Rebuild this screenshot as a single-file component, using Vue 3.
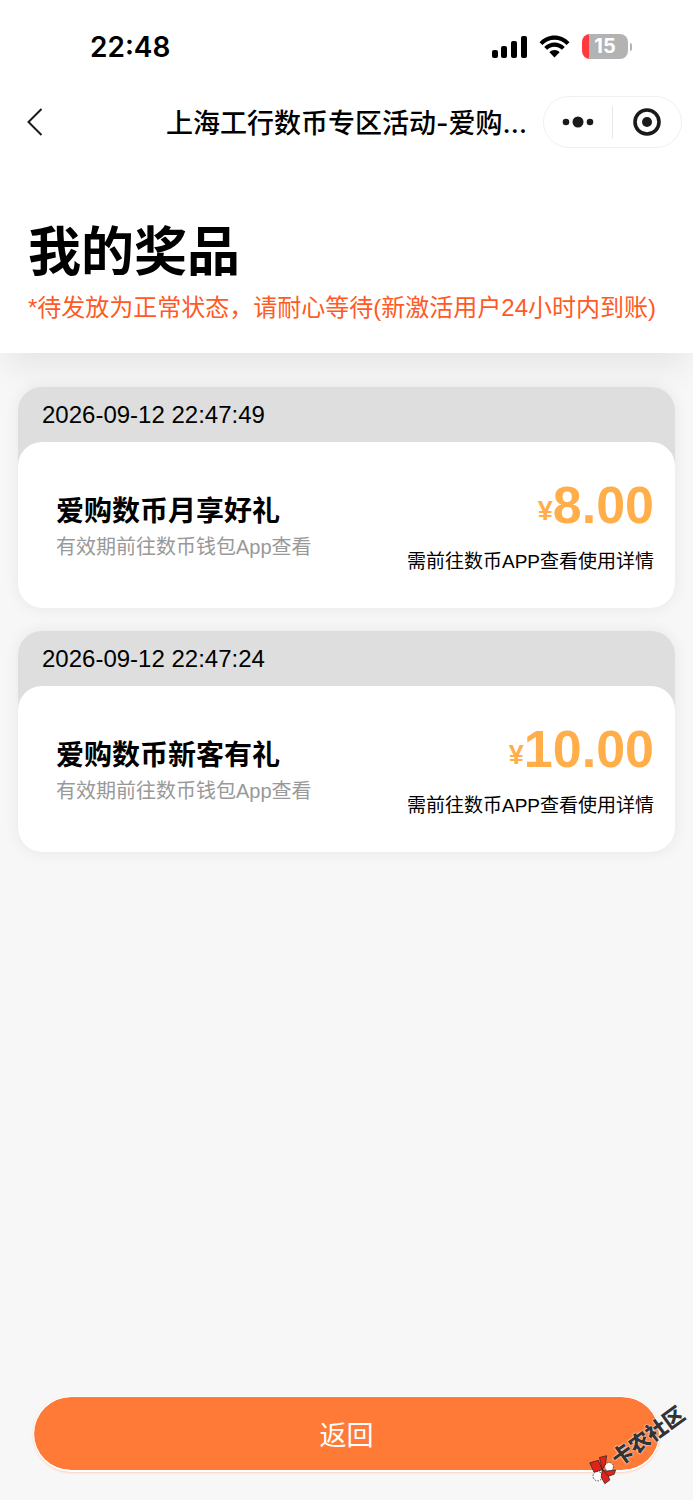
<script setup>
import { ref } from "vue";

// Lista de premios del usuario
const premios = ref([
  {
    fecha: "2026-09-12 22:47:49",
    nombre: "爱购数币月享好礼",
    validez: "有效期前往数币钱包App查看",
    importe: "8.00",
    nota: "需前往数币APP查看使用详情",
  },
  {
    fecha: "2026-09-12 22:47:24",
    nombre: "爱购数币新客有礼",
    validez: "有效期前往数币钱包App查看",
    importe: "10.00",
    nota: "需前往数币APP查看使用详情",
  },
]);
</script>

<template>
  <div class="pagina">
    <!-- Cabecera blanca -->
    <header class="cabecera">
      <!-- Barra de estado -->
      <div class="barra-estado">
        <span class="hora">22:48</span>
        <div class="indicadores">
          <svg class="icon-senal" viewBox="0 0 36 22">
            <rect x="1" y="14" width="6" height="8" rx="2"></rect>
            <rect x="10" y="10" width="6" height="12" rx="2"></rect>
            <rect x="20" y="5" width="6" height="17" rx="2"></rect>
            <rect x="30" y="0" width="6" height="22" rx="2"></rect>
          </svg>
          <svg class="icon-wifi" viewBox="0 0 31 23">
            <path d="M0.5 7.2 C8.5 -1.9 22.5 -1.9 30.5 7.2 L27.6 10 C21 2.9 10 2.9 3.4 10 Z"></path>
            <path d="M5.2 12 C10.8 6 20.2 6 25.8 12 L22.9 14.8 C18.8 10.6 12.2 10.6 8.1 14.8 Z"></path>
            <path d="M10.4 17.2 C13.2 14.4 17.8 14.4 20.6 17.2 L15.5 22.4 Z"></path>
          </svg>
          <span class="bateria"><span class="bateria-nivel">15</span></span>
        </div>
      </div>

      <!-- Barra de navegación -->
      <nav class="navegacion">
        <button class="btn-atras" aria-label="返回">
          <svg viewBox="0 0 16 28" fill="none" stroke="#1a1a1a" stroke-width="2">
            <path d="M14.5 1 L1.5 14 L14.5 27"></path>
          </svg>
        </button>
        <span class="titulo">上海工行数币专区活动-爱购…</span>
        <div class="capsula">
          <button class="btn-capsula" aria-label="更多">
            <svg class="icon-mas" viewBox="0 0 30 12" fill="#1a1a1a">
              <circle cx="3" cy="6" r="3.3"></circle>
              <circle cx="15" cy="6" r="5.5"></circle>
              <circle cx="27" cy="6" r="3.3"></circle>
            </svg>
          </button>
          <span class="separador"></span>
          <button class="btn-capsula" aria-label="关闭">
            <svg class="icon-cerrar" viewBox="0 0 28 28">
              <circle cx="14" cy="14" r="12" fill="none" stroke="#1a1a1a" stroke-width="3.6"></circle>
              <circle cx="14" cy="14" r="5" fill="#1a1a1a"></circle>
            </svg>
          </button>
        </div>
      </nav>

      <h1>我的奖品</h1>
      <p class="aviso">*待发放为正常状态，请耐心等待(新激活用户24小时内到账)</p>
    </header>

    <!-- Lista de premios -->
    <main class="lista">
      <article v-for="premio in premios" :key="premio.fecha" class="premio">
        <time class="fecha">{{ premio.fecha }}</time>
        <div class="contenido">
          <div class="detalle">
            <h2>{{ premio.nombre }}</h2>
            <p>{{ premio.validez }}</p>
          </div>
          <div class="valor">
            <strong class="importe"><span class="moneda">¥</span>{{ premio.importe }}</strong>
            <p>{{ premio.nota }}</p>
          </div>
        </div>
      </article>
    </main>

    <!-- Botón inferior -->
    <footer class="pie">
      <button class="btn-volver">返回</button>
      <div class="marca">
        <svg class="icon-marca" viewBox="0 0 78 78" stroke="#222" stroke-width="2">
          <g transform="rotate(36 39 39)">
            <circle cx="56" cy="31" r="12" fill="#fff" stroke-dasharray="5 3"></circle>
            <circle cx="24" cy="57" r="13" fill="#fff" stroke-dasharray="5 3"></circle>
            <path d="M2 20 L26 13 L37 39 L14 46 Z" fill="#e3231b"></path>
            <path d="M29 5 L49 0 L46 22 L37 39 Z" fill="#e3231b"></path>
            <path d="M37 39 L50 43 L74 40 L70 52 L54 57 Z" fill="#e3231b"></path>
            <path d="M37 39 L54 57 L58 68 L44 78 L34 60 Z" fill="#e3231b"></path>
          </g>
        </svg>
        <span>卡农社区</span>
      </div>
    </footer>
  </div>
</template>

<style>
body {
  background-color: #f7f7f7;
}
</style>

<style scoped>
.pagina {
  display: flex;
  flex-direction: column;
  min-height: 100vh;
  background-color: #f7f7f7;
  color: #000;
  font-family: "Liberation Sans", "Noto Sans CJK SC", sans-serif;
}

h1,
h2,
p {
  margin: 0;
}

button {
  padding: 0;
  border: none;
  background: none;
  font-family: inherit;
  cursor: pointer;
}

svg {
  display: block;
}

/* Cabecera */
.cabecera {
  background-color: #fff;
  padding-bottom: 30px;
  box-shadow: 0 20px 30px -6px rgba(0, 0, 0, 0.07);
}

.barra-estado {
  display: flex;
  align-items: center;
  justify-content: space-between;
  height: 93px;
  padding: 0 61px 0 90px;
}

.hora {
  font-family: Inter, sans-serif;
  font-size: 28px;
  font-weight: 600;
}

.indicadores {
  display: flex;
  align-items: center;
  gap: 12px;
}

.icon-senal {
  width: 36px;
  height: 22px;
}

.icon-wifi {
  width: 31px;
  height: 23px;
}

/* Batería */
.bateria {
  display: flex;
  align-items: center;
  gap: 2px;
}

.bateria::after {
  content: "";
  width: 2px;
  height: 8px;
  border-radius: 0 2px 2px 0;
  background-color: #b3b3b3;
}

.bateria-nivel {
  width: 46px;
  height: 25px;
  border-radius: 8px;
  background: linear-gradient(to right, #ff3a3f 7px, #b3b3b3 7px);
  color: #fff;
  font-family: Inter, sans-serif;
  font-size: 20px;
  font-weight: 700;
  line-height: 25px;
  text-align: center;
}

/* Barra de navegación */
.navegacion {
  display: flex;
  align-items: center;
  height: 58px;
  padding: 0 11px 0 27px;
}

.btn-atras svg {
  width: 16px;
  height: 28px;
}

.titulo {
  flex: 1;
  margin-right: 16px;
  padding-top: 4px;
  font-family: Inter, "Noto Sans CJK SC", sans-serif;
  font-size: 27px;
  font-weight: 500;
  line-height: 40px;
  text-align: right;
  white-space: nowrap;
}

.capsula {
  display: flex;
  align-items: center;
  box-sizing: border-box;
  width: 139px;
  height: 52px;
  border: 1px solid #f0f0f0;
  border-radius: 26px;
}

.btn-capsula {
  flex: 1;
  display: flex;
  justify-content: center;
}

.separador {
  width: 1px;
  height: 32px;
  background-color: #e8e8e8;
}

.icon-mas {
  width: 30px;
  height: 12px;
  overflow: visible;
}

.icon-cerrar {
  width: 28px;
  height: 28px;
}

h1 {
  padding: 62px 28px 0;
  font-size: 53px;
  font-weight: 700;
  line-height: 80px;
}

.aviso {
  padding: 0 28px;
  color: #ff5a26;
  font-size: 24px;
  line-height: 30px;
}

/* Lista de premios */
.lista {
  flex: 1;
  display: flex;
  flex-direction: column;
  gap: 23px;
  padding: 34px 18px;
}

.premio {
  border-radius: 24px;
  background-color: #dedede;
  box-shadow: 0 0 16px rgba(0, 0, 0, 0.07);
}

.fecha {
  display: block;
  padding: 0 24px;
  font-size: 24px;
  line-height: 55px;
}

.contenido {
  display: flex;
  justify-content: space-between;
  box-sizing: border-box;
  min-height: 166px;
  padding: 35px 21px 24px 38px;
  border-radius: 24px;
  background-color: #fff;
}

.detalle {
  padding-top: 15px;
}

.detalle h2 {
  font-size: 28px;
  font-weight: 700;
  line-height: 40px;
}

.detalle p {
  color: #999;
  font-size: 20px;
  line-height: 30px;
}

.valor {
  text-align: right;
}

.importe {
  display: block;
  color: #ffae49;
  font-size: 52px;
  line-height: 56px;
}

.moneda {
  font-size: 27px;
  line-height: 1;
  vertical-align: 3px;
}

.valor p {
  padding-top: 14px;
  font-size: 19px;
  line-height: 30px;
}

/* Botón inferior */
.pie {
  position: relative;
  padding: 0 33px 28px;
}

.btn-volver {
  display: block;
  width: 100%;
  height: 76px;
  border: 1px solid #fff;
  border-bottom-width: 2px;
  border-radius: 38px;
  background-color: #ff7a37;
  background-clip: padding-box;
  box-shadow: 0 1px 2px rgba(255, 122, 55, 0.3);
  color: #fff;
  font-size: 27px;
}

/* Marca inclinada sobre el botón */
.marca {
  position: absolute;
  right: 0;
  bottom: 40px;
  display: flex;
  align-items: center;
  transform: rotate(-36deg);
  color: #333;
  font-size: 21px;
  font-weight: 900;
  line-height: 30px;
  text-shadow: 0 0 1px #fff, 0 0 2px #fff;
}

.icon-marca {
  width: 28px;
  height: 28px;
  overflow: visible;
}
</style>
